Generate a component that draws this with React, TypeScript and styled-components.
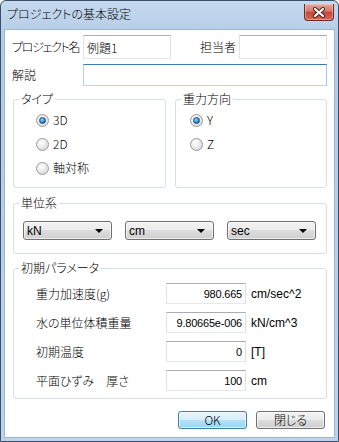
import React, { useState } from "react";
import styled, { createGlobalStyle } from "styled-components";

const GlobalStyle = createGlobalStyle`
  html, body {
    margin: 0;
    padding: 0;
    background: #ffffff;
  }
  body {
    font-family: "Noto Sans CJK JP", "Noto Sans", sans-serif;
    font-size: 12px;
    font-weight: 300;
    color: #000;
    font-feature-settings: "palt";
  }
  * {
    box-sizing: border-box;
  }
`;

const Window = styled.div`
  width: 339px;
  height: 442px;
  display: flex;
  flex-direction: column;
  background: linear-gradient(#c4d9ee, #b3cbe5 40px, #bcd3ea);
  border: 1px solid #3a5068;
  border-radius: 6px 6px 0 0;
  padding: 0 3px 3px;
`;

const TitleBar = styled.div`
  height: 28px;
  display: flex;
  justify-content: space-between;
  padding-left: 3px;
`;

const Title = styled.span`
  line-height: 26px;
  font-size: 12px;
  color: #000;
`;

const CloseButton = styled.div`
  width: 30px;
  height: 17px;
  margin: 3px 1px 0 0;
  border: 1px solid #6d2a25;
  border-top: none;
  border-radius: 0 0 4px 4px;
  background: linear-gradient(#e6a597 0%, #d77a6b 45%, #c2493c 50%, #d0685a 100%);
  box-shadow: inset 0 0 0 1px rgba(255, 255, 255, 0.35);
  display: flex;
  align-items: center;
  justify-content: center;
`;

const Client = styled.div`
  flex: 1;
  background: #ffffff;
  border: 1px solid #9fb6d1;
  padding: 5px 7px 0 7px;
  display: flex;
  flex-direction: column;
`;

const Row = styled.div<{ $h: number; $mt?: number }>`
  display: flex;
  align-items: center;
  height: ${(p) => p.$h}px;
  margin-top: ${(p) => p.$mt ?? 0}px;
`;

const Label = styled.span<{ $w: number; $ml?: number; $ls?: number }>`
  width: ${(p) => p.$w}px;
  margin-left: ${(p) => p.$ml ?? 0}px;
  letter-spacing: ${(p) => p.$ls ?? 0}px;
  flex-shrink: 0;
  line-height: 14px;
  white-space: pre;
`;

const TextBox = styled.input<{ $w: number; $focus?: boolean; $right?: boolean }>`
  width: ${(p) => p.$w}px;
  height: 100%;
  margin: 0;
  padding: 0 3px;
  font-family: ${(p) =>
    p.$right ? '"Liberation Sans", sans-serif' : '"Noto Sans CJK JP", sans-serif'};
  font-weight: 300;
  font-size: ${(p) => (p.$right ? 11 : 12)}px;
  letter-spacing: ${(p) => (p.$right ? -0.2 : 0)}px;
  color: #000;
  text-align: ${(p) => (p.$right ? "right" : "left")};
  background: #fff;
  border: 1px solid;
  border-color: ${(p) =>
    p.$focus ? "#3d7bad #a4c9e3 #b7d9ed #b5cfe7" : "#abadb3 #dbdfe6 #e3e9ef #e2e3ea"};
  outline: none;
`;

const GroupRow = styled.div`
  display: grid;
  grid-template-columns: 153px 152px;
  column-gap: 9px;
  margin: 6px 0 0 1px;
`;

const Group = styled.fieldset<{ $h: number; $mt?: number }>`
  margin: ${(p) => p.$mt ?? 0}px 0 0 ${(p) => (p.$mt !== undefined ? 1 : 0)}px;
  height: ${(p) => p.$h}px;
  min-width: 0;
  padding: 0;
  border: 1px solid #d5dfe5;
  border-radius: 3px;
`;

const Legend = styled.legend`
  margin-left: 5px;
  padding: 0 2px;
  line-height: 14px;
  font-size: 12px;
`;

const GroupBody = styled.div<{ $pt: number; $pl: number }>`
  padding: ${(p) => p.$pt}px 0 0 ${(p) => p.$pl}px;
`;

const RadioList = styled.div`
  display: flex;
  flex-direction: column;
  gap: 8px;
`;

const RadioItem = styled.label`
  display: flex;
  align-items: center;
  gap: 4px;
  height: 16px;
  line-height: 14px;
  cursor: default;
`;

const RadioCircle = styled.span<{ $on: boolean }>`
  position: relative;
  width: 13px;
  height: 13px;
  border-radius: 50%;
  border: 1px solid #9a9a9a;
  background: radial-gradient(circle at 40% 35%, #ffffff 0%, #e6e6e6 55%, #cfcfcf 100%);
  flex-shrink: 0;

  &::after {
    content: "";
    display: ${(p) => (p.$on ? "block" : "none")};
    position: absolute;
    left: 2px;
    top: 2px;
    width: 7px;
    height: 7px;
    border-radius: 50%;
    border: 1px solid #1d4f80;
    background: radial-gradient(circle at 40% 35%, #9fdcff 0%, #2c86cf 55%, #0d4f8f 100%);
    box-sizing: border-box;
  }
`;

const ComboRow = styled.div`
  display: flex;
  gap: 13px;
`;

const Combo = styled.div`
  position: relative;
  width: 89px;
  height: 19px;
  border: 1px solid #707070;
  border-radius: 3px;
  background: linear-gradient(#f2f2f2 0%, #ebebeb 50%, #dddddd 50%, #cfcfcf 100%);
  box-shadow: inset 0 0 0 1px rgba(255, 255, 255, 0.6);
  display: flex;
  align-items: center;
  padding-left: 3px;
  font-family: "Liberation Sans", "Noto Sans CJK JP", sans-serif;
  font-weight: 400;
  font-size: 12px;
  line-height: 14px;
`;

const Arrow = styled.span`
  position: absolute;
  right: 8px;
  top: 7px;
  width: 0;
  height: 0;
  border-left: 4px solid transparent;
  border-right: 4px solid transparent;
  border-top: 4px solid #000;
`;

const ParamList = styled.div`
  display: flex;
  flex-direction: column;
  gap: 8px;
`;

const Unit = styled.span`
  margin-left: 5px;
  line-height: 14px;
  white-space: nowrap;
  font-family: "Liberation Sans", "Noto Sans CJK JP", sans-serif;
  font-weight: 400;
`;

const ButtonRow = styled.div`
  display: flex;
  justify-content: flex-end;
  gap: 9px;
  margin: 12px 2px 0 0;
`;

const Button = styled.button<{ $default?: boolean }>`
  width: 69px;
  height: 18px;
  margin: 0;
  padding: 0;
  font: inherit;
  font-size: 12px;
  line-height: 14px;
  color: #000;
  border: 1px solid ${(p) => (p.$default ? "#3c7fb1" : "#707070")};
  border-radius: 3px;
  background: ${(p) =>
    p.$default
      ? "linear-gradient(#e5f4fc 0%, #d6eefb 50%, #b4e0f8 50%, #9dd5f3 100%)"
      : "linear-gradient(#f2f2f2 0%, #ebebeb 50%, #dddddd 50%, #cfcfcf 100%)"};
  box-shadow: inset 0 0 0 1px rgba(255, 255, 255, 0.6);
`;

const CloseGlyph = () => (
  <svg width="14" height="11" viewBox="0 0 14 11">
    <path d="M3 2 L11 9 M11 2 L3 9" stroke="#4b1d1a" strokeWidth="4" strokeLinecap="round" />
    <path d="M3 2 L11 9 M11 2 L3 9" stroke="#ffffff" strokeWidth="2.2" strokeLinecap="round" />
  </svg>
);

const typeOptions = ["3D", "2D", "軸対称"];
const gravityOptions = ["Y", "Z"];

const params = [
  { label: "重力加速度(g)", value: "980.665", unit: "cm/sec^2" },
  { label: "水の単位体積重量", value: "9.80665e-006", unit: "kN/cm^3" },
  { label: "初期温度", value: "0", unit: "[T]" },
  { label: "平面ひずみ　厚さ", value: "100", unit: "cm" },
];

const App = () => {
  const [type, setType] = useState("3D");
  const [gravity, setGravity] = useState("Y");

  return (
    <>
      <GlobalStyle />
      <Window>
        <TitleBar>
          <Title>プロジェクトの基本設定</Title>
          <CloseButton>
            <CloseGlyph />
          </CloseButton>
        </TitleBar>

        <Client>
          <Row $h={24}>
            <Label $w={71} $ls={-1.3}>プロジェクト名</Label>
            <TextBox $w={88} defaultValue="例題1" />
            <Label $w={39} $ml={29}>担当者</Label>
            <TextBox $w={88} />
          </Row>

          <Row $h={22} $mt={5}>
            <Label $w={71}>解説</Label>
            <TextBox $w={245} $focus />
          </Row>

          <GroupRow>
            <Group $h={96}>
              <Legend>タイプ</Legend>
              <GroupBody $pt={6} $pl={22}>
                <RadioList>
                  {typeOptions.map((opt) => (
                    <RadioItem key={opt} onClick={() => setType(opt)}>
                      <RadioCircle $on={type === opt} />
                      {opt}
                    </RadioItem>
                  ))}
                </RadioList>
              </GroupBody>
            </Group>

            <Group $h={96}>
              <Legend>重力方向</Legend>
              <GroupBody $pt={6} $pl={14}>
                <RadioList>
                  {gravityOptions.map((opt) => (
                    <RadioItem key={opt} onClick={() => setGravity(opt)}>
                      <RadioCircle $on={gravity === opt} />
                      {opt}
                    </RadioItem>
                  ))}
                </RadioList>
              </GroupBody>
            </Group>
          </GroupRow>

          <Group $h={58} $mt={8}>
            <Legend>単位系</Legend>
            <GroupBody $pt={11} $pl={9}>
              <ComboRow>
                <Combo>
                  kN
                  <Arrow />
                </Combo>
                <Combo>
                  cm
                  <Arrow />
                </Combo>
                <Combo>
                  sec
                  <Arrow />
                </Combo>
              </ComboRow>
            </GroupBody>
          </Group>

          <Group $h={138} $mt={7}>
            <Legend>初期パラメータ</Legend>
            <GroupBody $pt={8} $pl={22}>
              <ParamList>
                {params.map((p) => (
                  <Row key={p.label} $h={21}>
                    <Label $w={130}>{p.label}</Label>
                    <TextBox $w={80} $right defaultValue={p.value} />
                    <Unit>{p.unit}</Unit>
                  </Row>
                ))}
              </ParamList>
            </GroupBody>
          </Group>

          <ButtonRow>
            <Button $default>OK</Button>
            <Button>閉じる</Button>
          </ButtonRow>
        </Client>
      </Window>
    </>
  );
};

export default App;
